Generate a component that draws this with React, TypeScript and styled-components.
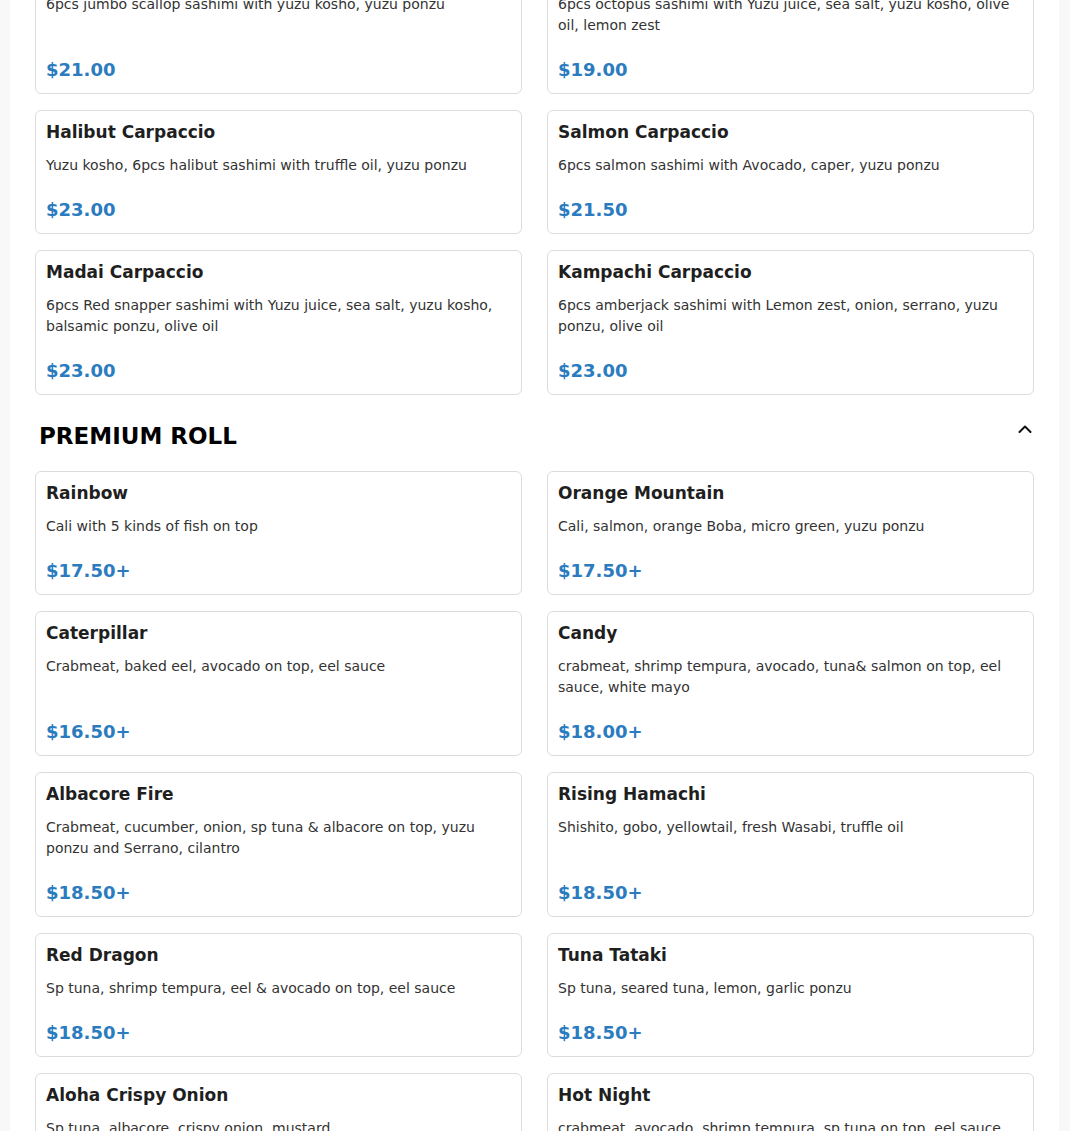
import React from 'react';
import styled, { createGlobalStyle } from 'styled-components';

type Item = {
  name: string;
  description: string;
  price: string;
};

type Section = {
  title?: string;
  items: Item[];
};

const sections: Section[] = [
  {
    items: [
      {
        name: 'Hotate Carpaccio',
        description: '6pcs jumbo scallop sashimi with yuzu kosho, yuzu ponzu',
        price: '$21.00',
      },
      {
        name: 'Tako Carpaccio',
        description:
          '6pcs octopus sashimi with Yuzu juice, sea salt, yuzu kosho, olive oil, lemon zest',
        price: '$19.00',
      },
      {
        name: 'Halibut Carpaccio',
        description: 'Yuzu kosho, 6pcs halibut sashimi with truffle oil, yuzu ponzu',
        price: '$23.00',
      },
      {
        name: 'Salmon Carpaccio',
        description: '6pcs salmon sashimi with Avocado, caper, yuzu ponzu',
        price: '$21.50',
      },
      {
        name: 'Madai Carpaccio',
        description:
          '6pcs Red snapper sashimi with Yuzu juice, sea salt, yuzu kosho, balsamic ponzu, olive oil',
        price: '$23.00',
      },
      {
        name: 'Kampachi Carpaccio',
        description:
          '6pcs amberjack sashimi with Lemon zest, onion, serrano, yuzu ponzu, olive oil',
        price: '$23.00',
      },
    ],
  },
  {
    title: 'PREMIUM ROLL',
    items: [
      { name: 'Rainbow', description: 'Cali with 5 kinds of fish on top', price: '$17.50+' },
      {
        name: 'Orange Mountain',
        description: 'Cali, salmon, orange Boba, micro green, yuzu ponzu',
        price: '$17.50+',
      },
      {
        name: 'Caterpillar',
        description: 'Crabmeat, baked eel, avocado on top, eel sauce',
        price: '$16.50+',
      },
      {
        name: 'Candy',
        description: 'crabmeat, shrimp tempura, avocado, tuna& salmon on top, eel sauce, white mayo',
        price: '$18.00+',
      },
      {
        name: 'Albacore Fire',
        description:
          'Crabmeat, cucumber, onion, sp tuna & albacore on top, yuzu ponzu and Serrano, cilantro',
        price: '$18.50+',
      },
      {
        name: 'Rising Hamachi',
        description: 'Shishito, gobo, yellowtail, fresh Wasabi, truffle oil',
        price: '$18.50+',
      },
      {
        name: 'Red Dragon',
        description: 'Sp tuna, shrimp tempura, eel & avocado on top, eel sauce',
        price: '$18.50+',
      },
      {
        name: 'Tuna Tataki',
        description: 'Sp tuna, seared tuna, lemon, garlic ponzu',
        price: '$18.50+',
      },
      {
        name: 'Aloha Crispy Onion',
        description: 'Sp tuna, albacore, crispy onion, mustard',
        price: '$18.50+',
      },
      {
        name: 'Hot Night',
        description: 'crabmeat, avocado, shrimp tempura, sp tuna on top, eel sauce',
        price: '$18.50+',
      },
    ],
  },
];

const GlobalStyle = createGlobalStyle`
  html, body {
    margin: 0;
    padding: 0;
    background: #f8f8f8;
    overflow: hidden;
  }
  body {
    font-family: "DejaVu Sans", Verdana, sans-serif;
    color: #222;
  }
`;

const ChevronUp = () => (
  <svg width="14" height="8" viewBox="0 0 14 8" fill="none">
    <polyline
      points="1.5,7 7,1.5 12.5,7"
      stroke="#111"
      strokeWidth="2"
      strokeLinecap="round"
      strokeLinejoin="round"
    />
  </svg>
);

const App = () => (
  <>
    <GlobalStyle />
    <Panel>
      {sections.map((section, i) => (
        <SectionBlock key={i}>
          {section.title && (
            <SectionHeader>
              <SectionTitle>{section.title}</SectionTitle>
              <Toggle type="button" aria-label="Collapse">
                <ChevronUp />
              </Toggle>
            </SectionHeader>
          )}
          <Grid>
            {section.items.map((item) => (
              <Card key={item.name}>
                <ItemName>{item.name}</ItemName>
                <ItemDescription>{item.description}</ItemDescription>
                <Price>{item.price}</Price>
              </Card>
            ))}
          </Grid>
        </SectionBlock>
      ))}
    </Panel>
  </>
);

// page is shown scrolled a little, so the first row starts above the frame
const Panel = styled.main`
  margin: -51px 11px 0 10px;
  padding: 0 25px 40px;
  background: #fff;
  min-height: 1300px;
`;

const SectionBlock = styled.section`
  display: flex;
  flex-direction: column;
`;

const SectionHeader = styled.div`
  display: flex;
  justify-content: space-between;
  align-items: flex-start;
  margin: 26px 0 20px;
  padding: 0 2px 0 4px;
`;

const SectionTitle = styled.h2`
  margin: 0;
  font-size: 23px;
  line-height: 30px;
  font-weight: 700;
  color: #000;
`;

const Toggle = styled.button`
  display: flex;
  border: none;
  background: none;
  padding: 0;
  margin-top: 4px;
  cursor: pointer;
`;

const Grid = styled.div`
  display: grid;
  grid-template-columns: 1fr 1fr;
  column-gap: 25px;
  row-gap: 16px;
`;

const Card = styled.article`
  display: flex;
  flex-direction: column;
  border: 1px solid #dcdcdc;
  border-radius: 6px;
  padding: 9px 10px 10px;
  background: #fff;
`;

const ItemName = styled.h3`
  margin: 0;
  font-size: 17px;
  line-height: 24px;
  font-weight: 700;
  color: #1f1f1f;
`;

const ItemDescription = styled.p`
  margin: 11px 0 0;
  font-size: 14px;
  line-height: 21px;
  color: #333;
`;

const Price = styled.div`
  margin-top: auto;
  padding-top: 20px;
  font-size: 18px;
  line-height: 27px;
  font-weight: 700;
  color: #2b7bbf;
`;

export default App;
